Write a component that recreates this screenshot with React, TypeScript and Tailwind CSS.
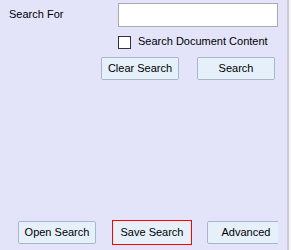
import React from "react";

const font = { fontFamily: '"Liberation Sans", Arial, sans-serif' };

function Btn({ label, className = "" }: { label: string; className?: string }) {
  return (
    <div
      className={
        "flex shrink-0 items-center justify-center bg-[#e5f0fb] text-[11px] leading-[13px] text-black " +
        className
      }
    >
      {label}
    </div>
  );
}

export default function App() {
  return (
    <div className="flex h-[250px] w-[291px]" style={font}>
      <div className="flex h-full w-[287px] flex-col bg-[#e3e4fa]">
        <div className="flex pt-[3px]">
          <div className="w-[118px] pl-[9px] pt-[5px] text-[11px] leading-[13px] text-black">Search For</div>
          <div className="h-[24px] w-[160px] border border-[#a9a9b4] bg-white" />
        </div>
        <div className="ml-[118px] mt-[8px] flex items-center gap-[7px]">
          <div className="h-[13px] w-[13px] border border-[#333333] bg-white" />
          <div className="mb-[2px] text-[11px] leading-[13px] text-black">Search Document Content</div>
        </div>
        <div className="ml-[101px] mt-[7px] flex gap-[18px]">
          <Btn label="Clear Search" className="h-[23px] w-[78px] rounded-[2px] border border-[#a9b6c9]" />
          <Btn label="Search" className="h-[23px] w-[78px] rounded-[2px] border border-[#a9b6c9]" />
        </div>
        <div className="flex-1" />
        <div className="mb-[5px] flex w-[278px] items-center overflow-hidden">
          <Btn label="Open Search" className="ml-[18px] h-[23px] w-[78px] rounded-[2px] border border-[#a9b6c9]" />
          <Btn label="Save Search" className="ml-[16px] h-[25px] w-[80px] border border-[#ff0000]" />
          <Btn label="Advanced" className="ml-[15px] h-[23px] w-[78px] rounded-[2px] border border-[#a9b6c9]" />
        </div>
      </div>
      <div className="h-full w-[2px] bg-[#c9cad6]" />
      <div className="h-full w-[2px] bg-[#f4f4f6]" />
    </div>
  );
}
